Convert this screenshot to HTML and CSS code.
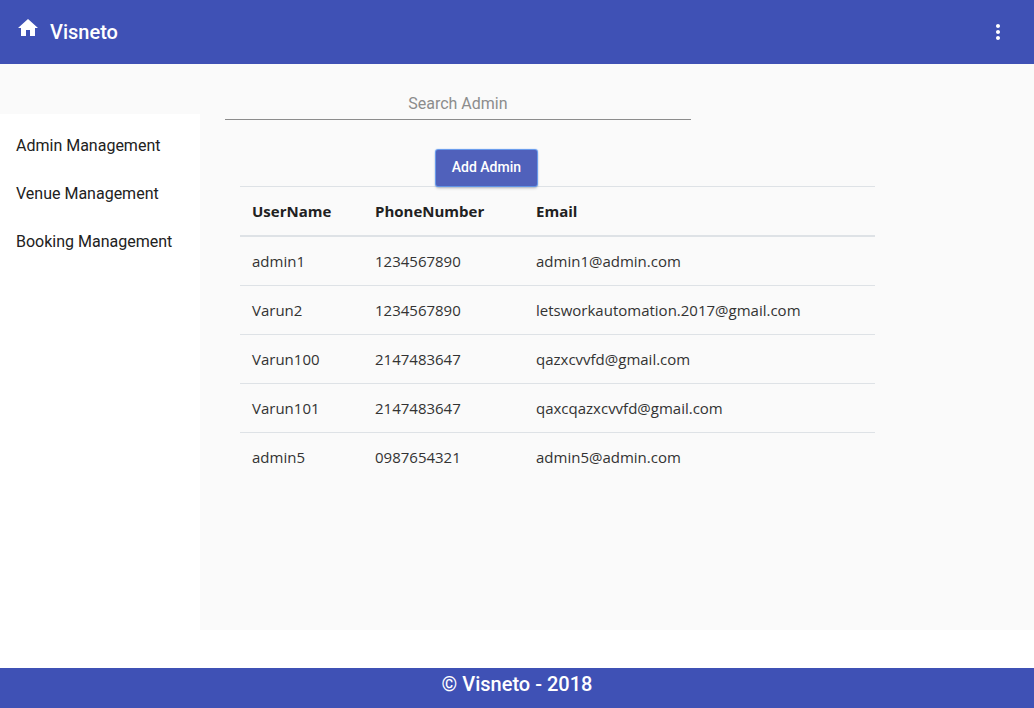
FILE: index.html
```html
<!DOCTYPE html>
<html lang="en">
<head>
<meta charset="utf-8">
<meta name="viewport" content="width=device-width, initial-scale=1">
<title>Visneto</title>
<link rel="stylesheet" href="styles.css">
</head>
<body class="page">
<header class="toolbar">
  <a class="brand" href="#">
    <svg class="brand-icon" viewBox="0 0 24 24" aria-hidden="true"><path d="M10 20v-6h4v6h5v-8h3L12 3 2 12h3v8z"/></svg>
    <span class="brand-name">Visneto</span>
  </a>
  <button class="menu-button" type="button" aria-label="Menu">
    <svg class="menu-icon" viewBox="0 0 24 24" aria-hidden="true"><path d="M12 8c1.100 0 2-.9 2-2s-.9-2-2-2-2 .9-2 2 .9 2 2 2zm0 2c-1.100 0-2 .9-2 2s.9 2 2 2 2-.9 2-2-.9-2-2-2zm0 6c-1.100 0-2 .9-2 2s.9 2 2 2 2-.9 2-2-.9-2-2-2z"/></svg>
  </button>
</header>
<div class="layout">
  <nav class="sidebar">
    <a class="sidebar-link" href="#">Admin Management</a>
    <a class="sidebar-link" href="#">Venue Management</a>
    <a class="sidebar-link" href="#">Booking Management</a>
  </nav>
  <main class="content">
    <input class="search" type="text" placeholder="Search Admin" aria-label="Search Admin">
    <div class="actions">
      <button class="add-button" type="button">Add Admin</button>
    </div>
    <table class="admins">
      <thead>
        <tr><th class="col-name">UserName</th><th class="col-phone">PhoneNumber</th><th>Email</th></tr>
      </thead>
      <tbody>
        <tr><td>admin1</td><td>1234567890</td><td>admin1@admin.com</td></tr>
        <tr><td>Varun2</td><td>1234567890</td><td>letsworkautomation.2017@gmail.com</td></tr>
        <tr><td>Varun100</td><td>2147483647</td><td>qazxcvvfd@gmail.com</td></tr>
        <tr><td>Varun101</td><td>2147483647</td><td>qaxcqazxcvvfd@gmail.com</td></tr>
        <tr><td>admin5</td><td>0987654321</td><td>admin5@admin.com</td></tr>
      </tbody>
    </table>
  </main>
</div>
<footer class="footer">© Visneto - 2018</footer>
</body>
</html>
```
FILE: styles.css
```css
* {
  box-sizing: border-box;
}

.page {
  display: flex;
  flex-direction: column;
  min-height: 100vh;
  margin: 0;
  background: #fff;
  color: #212121;
  font: 16px/24px Roboto, sans-serif;
}

.toolbar {
  display: flex;
  align-items: center;
  justify-content: space-between;
  height: 64px;
  padding: 0 24px 0 16px;
  background: #3f51b5;
  color: #fff;
}

.brand {
  display: flex;
  align-items: flex-start;
  gap: 10px;
  color: #fff;
  font-size: 20px;
  font-weight: 500;
  line-height: 32px;
  text-decoration: none;
}

.brand-icon,
.menu-icon {
  display: block;
  width: 24px;
  height: 24px;
  fill: currentColor;
}

.menu-button {
  padding: 0;
  border: 0;
  background: none;
  color: #fff;
}

.layout {
  display: flex;
  flex: 1;
  margin-bottom: 38px;
  background: #fafafa;
}

.sidebar {
  flex: 0 0 200px;
  margin-top: 50px;
  padding: 8px 0;
  background: #fff;
}

.sidebar-link {
  display: block;
  padding: 0 16px;
  color: #212121;
  line-height: 48px;
  text-decoration: none;
}

.content {
  flex: 1;
  padding: 24px 24px 24px 40px;
}

.search {
  display: block;
  width: 60.5%;
  height: 32px;
  margin-left: -15px;
  padding: 0;
  border: 0;
  border-bottom: 1px solid #8c8c8c;
  border-radius: 0;
  outline: 0;
  background: transparent;
  font: inherit;
  text-align: center;
}

.search::placeholder {
  color: #8c8c8c;
}

.actions {
  display: flex;
  justify-content: center;
  width: 64%;
  padding-top: 30px;
}

.add-button {
  position: relative;
  height: 36px;
  padding: 0 16px 2px;
  border: 0;
  border-radius: 2px;
  background: #5061bb;
  box-shadow: 0 0 1px 1px #5b93ec, 0 2px 3px 0 rgba(0, 0, 0, 0.3);
  color: #fff;
  font: 500 14px/34px Roboto, sans-serif;
}

.admins {
  width: 82.5%;
  border-collapse: separate;
  border-spacing: 0;
  font: 15px/24px "Open Sans", "Noto Sans", sans-serif;
}

.admins th,
.admins td {
  padding: 12px;
  border-top: 1px solid #dee2e6;
  text-align: left;
}

.admins th {
  border-bottom: 2px solid #dee2e6;
  font-weight: 700;
}

.admins td {
  color: #333;
}

.admins tbody tr:first-child td {
  border-top: 0;
}

.col-name {
  width: 123px;
}

.col-phone {
  width: 161px;
}

.footer {
  height: 40px;
  background: #3f51b5;
  color: #fff;
  font-size: 20px;
  font-weight: 500;
  line-height: 32px;
  text-align: center;
}
```
